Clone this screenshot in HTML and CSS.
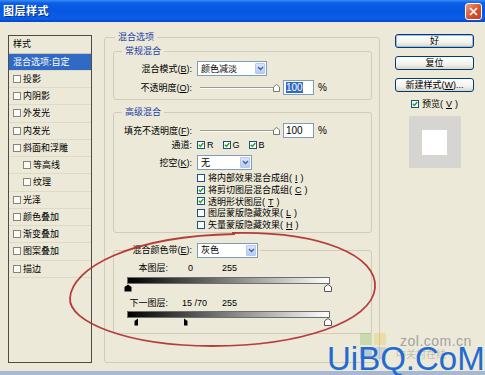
FILE: index.html
```html
<!DOCTYPE html>
<html lang="zh-CN">
<head>
  <meta charset="UTF-8" />
  <title>图层样式</title>
  <link rel="stylesheet" href="styles.css">
</head>
<body>
  <div class="window">
    <div class="titlebar">
      <span class="title">图层样式</span>
      <span class="close">
        <svg width="9" height="9" viewBox="0 0 9 9"><path d="M1 1L8 8M8 1L1 8" stroke="#fff" stroke-width="1.7"/></svg>
      </span>
    </div>

    <div class="client">
      <div class="stylelist">
        <div class="head">样式</div>
        <div class="item selected">混合选项:自定</div>
        <div class="item"><i class="lbox"></i>投影</div>
        <div class="item"><i class="lbox"></i>内阴影</div>
        <div class="item"><i class="lbox"></i>外发光</div>
        <div class="item"><i class="lbox"></i>内发光</div>
        <div class="item"><i class="lbox"></i>斜面和浮雕</div>
        <div class="item sub"><i class="lbox"></i>等高线</div>
        <div class="item sub"><i class="lbox"></i>纹理</div>
        <div class="item"><i class="lbox"></i>光泽</div>
        <div class="item"><i class="lbox"></i>颜色叠加</div>
        <div class="item"><i class="lbox"></i>渐变叠加</div>
        <div class="item"><i class="lbox"></i>图案叠加</div>
        <div class="item"><i class="lbox"></i>描边</div>
      </div>

      <fieldset class="group main">
        <legend>混合选项</legend>

        <fieldset class="group normal">
          <legend>常规混合</legend>
          <div class="row tall">
            <label>混合模式(<u>B</u>):</label>
            <div class="select w70"><span>颜色减淡</span><b class="drop"><svg width="7" height="5" viewBox="0 0 7 5"><path d="M1 1l2.5 2.5L6 1" stroke="#4a5f8c" stroke-width="1.4" fill="none"/></svg></b></div>
          </div>
          <div class="row tall gap4">
            <label>不透明度(<u>O</u>):</label>
            <div class="slider">
              <div class="track"></div>
              <svg class="thumb" width="7" height="8" viewBox="0 0 7 8"><path d="M3.5 .5L6.5 3v4.5h-6V3z" fill="#fff" stroke="#6d7d6a"/></svg>
            </div>
            <div class="num"><span class="sel">100</span></div>
            <span class="pct">%</span>
          </div>
        </fieldset>

        <fieldset class="group advanced">
          <legend>高级混合</legend>
          <div class="row tall">
            <label>填充不透明度(<u>F</u>):</label>
            <div class="slider">
              <div class="track"></div>
              <svg class="thumb" width="7" height="8" viewBox="0 0 7 8"><path d="M3.5 .5L6.5 3v4.5h-6V3z" fill="#fff" stroke="#6d7d6a"/></svg>
            </div>
            <div class="num">100</div>
            <span class="pct">%</span>
          </div>
          <div class="row short">
            <label>通道:</label>
            <span class="chan"><i class="cb on"><svg width="6" height="6" viewBox="0 0 6 6"><path d="M.8 2.8l1.6 1.7L5.3 1" stroke="#21a121" stroke-width="1.4" fill="none"/></svg></i>R</span>
            <span class="chan"><i class="cb on"><svg width="6" height="6" viewBox="0 0 6 6"><path d="M.8 2.8l1.6 1.7L5.3 1" stroke="#21a121" stroke-width="1.4" fill="none"/></svg></i>G</span>
            <span class="chan"><i class="cb on"><svg width="6" height="6" viewBox="0 0 6 6"><path d="M.8 2.8l1.6 1.7L5.3 1" stroke="#21a121" stroke-width="1.4" fill="none"/></svg></i>B</span>
          </div>
          <div class="row tall gap4">
            <label>挖空(<u>K</u>):</label>
            <div class="select w55"><span>无</span><b class="drop"><svg width="7" height="5" viewBox="0 0 7 5"><path d="M1 1l2.5 2.5L6 1" stroke="#4a5f8c" stroke-width="1.4" fill="none"/></svg></b></div>
          </div>
          <div class="checks">
            <div class="check"><i class="cb"></i>将内部效果混合成组(<u>I</u>)</div>
            <div class="check"><i class="cb on"><svg width="6" height="6" viewBox="0 0 6 6"><path d="M.8 2.8l1.6 1.7L5.3 1" stroke="#21a121" stroke-width="1.4" fill="none"/></svg></i>将剪切图层混合成组(<u>C</u>)</div>
            <div class="check"><i class="cb on"><svg width="6" height="6" viewBox="0 0 6 6"><path d="M.8 2.8l1.6 1.7L5.3 1" stroke="#21a121" stroke-width="1.4" fill="none"/></svg></i>透明形状图层(<u>T</u>)</div>
            <div class="check"><i class="cb"></i>图层蒙版隐藏效果(<u>L</u>)</div>
            <div class="check"><i class="cb"></i>矢量蒙版隐藏效果(<u>H</u>)</div>
          </div>
        </fieldset>

        <fieldset class="group blendif">
          <legend>
            <label>混合颜色带(<u>E</u>):</label>
            <div class="select w61"><span>灰色</span><b class="drop"><svg width="7" height="5" viewBox="0 0 7 5"><path d="M1 1l2.5 2.5L6 1" stroke="#4a5f8c" stroke-width="1.4" fill="none"/></svg></b></div>
          </legend>
          <div class="vals">
            <label>本图层:</label>
            <span class="v1"><span class="pad">0</span></span>
            <span>255</span>
          </div>
          <div class="ramp"></div>
          <svg class="marks" width="210" height="8" viewBox="0 0 210 8">
            <path d="M4 .5L7.5 3v4.5h-7V3z" fill="#000"/>
            <path d="M204 .5L207.5 3v4.5h-7V3z" fill="#fff" stroke="#555"/>
          </svg>
          <div class="vals second">
            <label>下一图层:</label>
            <span class="v1">15 /70</span>
            <span>255</span>
          </div>
          <div class="ramp two"></div>
          <svg class="marks" width="210" height="8" viewBox="0 0 210 8">
            <path d="M14 .5v7h-3.5V3z" fill="#000"/>
            <path d="M60 .5L63.5 3v4.5H60z" fill="#000"/>
            <path d="M204 .5L207.5 3v4.5h-7V3z" fill="#fff" stroke="#555"/>
          </svg>
        </fieldset>
      </fieldset>

      <div class="side">
        <div class="btn default">好</div>
        <div class="btn">复位</div>
        <div class="btn">新建样式(<u>W</u>)...</div>
        <div class="preview-check"><i class="cb on"><svg width="6" height="6" viewBox="0 0 6 6"><path d="M.8 2.8l1.6 1.7L5.3 1" stroke="#21a121" stroke-width="1.4" fill="none"/></svg></i>预览(<u>V</u>)</div>
        <div class="preview"><div class="swatch"></div></div>
      </div>
    </div>

    <svg class="annot" width="485" height="375" viewBox="0 0 485 375">
      <path d="M232 233C322 231 378 256 375 288C372 322 300 346 212 346C128 346 68 322 70 298C72 268 130 236 235 234" fill="none" stroke="#b02a2a" stroke-width="1.8" opacity=".9"/>
    </svg>

    <div class="watermark">
      <svg class="wm-logo" width="30" height="30" viewBox="0 0 30 30"><rect x="2" y="2" width="12" height="12" fill="#8fbf60"/><rect x="16" y="2" width="12" height="12" fill="#e6c95a"/><rect x="2" y="16" width="12" height="12" fill="#5d8fd0"/><rect x="16" y="16" width="12" height="12" fill="#9bb0c8"/></svg>
      <span class="zol">zol.com.cn</span>
      <span class="zgc">中关村在线</span>
      <span class="uibq">UiBQ.CoM</span>
    </div>
  </div>
</body>
</html>
```

FILE: styles.css
```css
* {
  box-sizing: border-box;
}

html,
body {
  overflow: hidden;
}

body {
  margin: 0;
  background: #ece9d8;
  font-family: "Liberation Sans", "Noto Sans CJK SC", sans-serif;
  font-size: 9px;
  line-height: 12px;
  color: #000;
}

.window {
  position: relative;
  width: 485px;
  height: 375px;
  display: flex;
  flex-direction: column;
  background: #ece9d8;
  border-bottom: 4px solid #a7b8d3;
}

.titlebar {
  flex: none;
  height: 22px;
  display: flex;
  align-items: center;
  justify-content: space-between;
  padding: 0 3px 0 3px;
  background: linear-gradient(#3b8cf5 0, #0a5fe6 3px, #0558df 50%, #0a5de6 85%, #0446c8 100%);
}

.title {
  color: #fff;
  font-weight: bold;
  font-size: 11px;
  letter-spacing: 0.5px;
  text-shadow: 1px 1px 0 #0b2f86;
}

.close {
  width: 17px;
  height: 17px;
  display: flex;
  align-items: center;
  justify-content: center;
  border: 1px solid #fff;
  border-radius: 3px;
  background: linear-gradient(135deg, #f09a7e, #d6532b 55%, #c0401a);
}

.client {
  flex: 1;
  display: flex;
  align-items: flex-start;
  padding: 13px 0 0 8px;
}

/* style list on the left */
.stylelist {
  flex: none;
  width: 84px;
  height: 328px;
  border: 1px solid #4d4d45;
}

.head {
  height: 17.5px;
  line-height: 16px;
  padding-left: 4px;
  border-bottom: 1px solid #cbc7b4;
}

.item {
  height: 17.25px;
  display: flex;
  align-items: center;
  gap: 2px;
  padding-left: 4px;
  border-bottom: 1px solid #dedac9;
}

.item.sub {
  padding-left: 14px;
}

.item.selected {
  background: #316ac5;
  color: #fff;
}

.lbox {
  width: 8px;
  height: 8px;
  border: 1px solid #85857c;
  background: #fbfbf8;
}

/* group boxes */
.group {
  margin: 0;
  border: 1px solid #d0ccb9;
  border-radius: 3px;
  min-width: 0;
}

.group legend {
  color: #1a3fa6;
  line-height: 12px;
  padding: 0 3px;
  margin-left: 4px;
}

.main {
  flex: none;
  width: 276px;
  height: 332px;
  margin: -4px 0 0 12px;
  padding: 2px 7px 0 8px;
}

.main > legend {
  margin-left: 2px;
}

.normal {
  padding: 4px 4px 4px 4px;
}

.advanced {
  margin-top: 6px;
  padding: 5px 4px 1px 4px;
}

.blendif {
  margin-top: 10px;
  padding: 4px 4px 7px 4px;
}

.blendif legend {
  display: flex;
  align-items: center;
  margin-left: 8px;
  padding: 0 2px 0 0;
  color: #000;
}

.blendif legend label {
  width: 66px;
  text-align: right;
}

.blendif legend .select {
  margin-left: 5px;
}

.row {
  display: flex;
  align-items: center;
}

.row label {
  width: 74px;
  text-align: right;
  margin-right: 5px;
}

.row.tall {
  height: 15px;
}

.row.short {
  height: 12px;
  margin-top: 1px;
}

.row.gap4 {
  margin-top: 4px;
}

/* dropdowns */
.select {
  height: 15px;
  display: flex;
  align-items: center;
  justify-content: space-between;
  padding: 1px 1px 1px 3px;
  background: #fff;
  border: 1px solid #7f9db9;
}

.w70 { width: 70px; }
.w55 { width: 55px; }
.w61 { width: 61px; }

.drop {
  width: 10px;
  height: 11px;
  display: flex;
  align-items: center;
  justify-content: center;
  border: 1px solid #b5c8f2;
  border-radius: 1px;
  background: linear-gradient(#dbe6fd, #b6cbf6);
}

/* sliders and number fields */
.slider {
  position: relative;
  width: 80px;
  height: 15px;
  margin-left: 3px;
  display: flex;
  align-items: center;
}

.track {
  width: 75px;
  height: 2px;
  border-top: 1px solid #9d9a8c;
  border-bottom: 1px solid #fff;
}

.thumb {
  position: absolute;
  right: 0;
  top: 4px;
}

.num {
  width: 31px;
  height: 15px;
  margin-left: 3px;
  padding: 0 2px;
  line-height: 13px;
  background: #fff;
  border: 1px solid #7f9db9;
  font-size: 10px;
}

.sel {
  background: #316ac5;
  color: #fff;
}

.pct {
  margin-left: 4px;
  font-size: 10px;
}

/* checkboxes */
.cb {
  width: 8px;
  height: 8px;
  flex: none;
  display: inline-flex;
  align-items: center;
  justify-content: center;
  border: 1px solid #1c5180;
  background: #fff;
}

.chan {
  display: inline-flex;
  align-items: center;
  gap: 2px;
  margin-right: 9px;
}

.checks {
  margin-top: 2px;
  padding-left: 79px;
}

.check {
  height: 11.8px;
  display: flex;
  align-items: center;
  gap: 3px;
}

/* blend-if ramps */
.vals {
  display: flex;
  align-items: center;
  height: 12px;
}

.vals label {
  width: 50px;
  text-align: right;
}

.vals .v1 {
  width: 40px;
  margin-left: 14px;
}

.vals .pad {
  padding-left: 6px;
}

.vals.second {
  margin-top: 5px;
}

.ramp {
  width: 203px;
  height: 7px;
  margin: 3px 0 0 9px;
  border: 1px solid #6f6f6a;
  background: linear-gradient(to right, #000, #fff);
}

.ramp.two {
  margin-top: 2px;
}

.marks {
  display: block;
  margin-left: 6px;
}

/* right column */
.side {
  flex: none;
  width: 79px;
  margin: -1px 0 0 15px;
  display: flex;
  flex-direction: column;
  align-items: center;
}

.btn {
  width: 79px;
  height: 14px;
  margin-bottom: 8px;
  display: flex;
  align-items: center;
  justify-content: center;
  border: 1px solid #003c74;
  border-radius: 3px;
  background: linear-gradient(#fff, #f3f2ec 60%, #d9d5c9);
}

.btn.default {
  box-shadow: inset 0 0 0 1px #9fbbeb;
}

.preview-check {
  display: flex;
  align-items: center;
  gap: 3px;
  margin-top: -2px;
  height: 12px;
}

.preview {
  width: 52px;
  height: 52px;
  margin-top: 6px;
  display: flex;
  align-items: center;
  justify-content: center;
  background: #d6d5d1;
}

.swatch {
  width: 25px;
  height: 25px;
  background: #fff;
}

/* overlays */
.annot {
  position: absolute;
  left: 0;
  top: 0;
  pointer-events: none;
}

.watermark {
  position: absolute;
  left: 0;
  top: 0;
  width: 485px;
  height: 375px;
  pointer-events: none;
}

.wm-logo {
  position: absolute;
  left: 358px;
  top: 331px;
  opacity: 0.35;
}

.zol {
  position: absolute;
  left: 400px;
  top: 333px;
  font-size: 14px;
  line-height: 16px;
  color: #a3a3a0;
  letter-spacing: 0.5px;
}

.zgc {
  position: absolute;
  left: 396px;
  top: 349px;
  font-size: 10px;
  color: #c2c0b4;
}

.uibq {
  position: absolute;
  left: 327px;
  top: 342px;
  font-size: 33px;
  line-height: 33px;
  color: #1f6bd3;
}
```
